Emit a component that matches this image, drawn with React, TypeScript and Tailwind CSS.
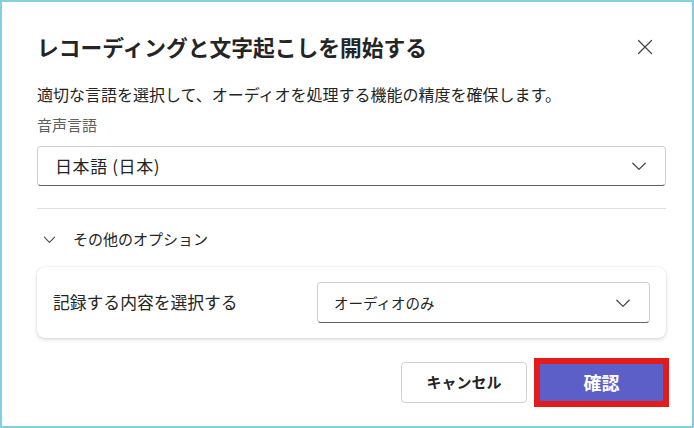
const FONT = '"Noto Sans CJK JP", "Noto Sans", sans-serif';

function ChevronDown({ size = 16 }: { size?: number }) {
  return (
    <svg width={size} height={size} viewBox="0 0 16 16" fill="none">
      <path d="M2.5 5.5 L8 11 L13.5 5.5" stroke="#424242" strokeWidth="1.1" strokeLinecap="round" strokeLinejoin="round" />
    </svg>
  );
}

export default function App() {
  return (
    <div
      className="w-[694px] h-[428px] bg-white border-2 border-[#86cfe0] flex flex-col pl-[35px] pr-[26px] pt-[31px] text-[#242424]"
      style={{ fontFamily: FONT }}
    >
      {/* header */}
      <div className="flex items-center justify-between h-[28px]">
        <h1 className="text-[21.75px] leading-[28px] font-semibold">レコーディングと文字起こしを開始する</h1>
        <button className="mr-[13px] w-4 h-4 flex items-center justify-center">
          <svg width="16" height="16" viewBox="0 0 16 16" fill="none">
            <path d="M1.5 1.5 L14.5 14.5 M14.5 1.5 L1.5 14.5" stroke="#424242" strokeWidth="1.2" strokeLinecap="round" />
          </svg>
        </button>
      </div>

      <p className="mt-[22px] text-[16px] leading-[22px]">適切な言語を選択して、オーディオを処理する機能の精度を確保します。</p>
      <label className="mt-[10px] text-[15px] leading-[20px] text-[#616161]">音声言語</label>

      <div className="mt-[11px] h-[40px] flex items-center justify-between rounded-[4px] border border-[#d1d1d1] border-b-[#616161] pl-[17px] pr-[17px]">
        <span className="text-[17px] tracking-[0.6px]">日本語 (日本)</span>
        <ChevronDown size={18} />
      </div>

      <div className="mt-[22px] h-px bg-[#e0e0e0]" />

      {/* more options toggle */}
      <div className="mt-[20px] h-[20px] flex items-center">
        <span className="ml-[5px]"><ChevronDown size={15} /></span>
        <span className="ml-[16px] text-[15px] leading-[20px]">その他のオプション</span>
      </div>

      <div className="mt-[18px] h-[71px] rounded-[8px] bg-white shadow-[0_0_2px_rgba(0,0,0,0.12),0_2px_4px_rgba(0,0,0,0.12)] flex items-center justify-between pl-[16px] pr-[16px]">
        <span className="text-[16.8px]">記録する内容を選択する</span>
        <div className="w-[333px] h-[41px] flex items-center justify-between rounded-[4px] border border-[#d1d1d1] border-b-[#616161] pl-[16px] pr-[17px]">
          <span className="text-[14.5px]">オーディオのみ</span>
          <ChevronDown size={18} />
        </div>
      </div>

      {/* footer */}
      <div className="mt-[20px] flex items-center justify-end mr-[-3px]">
        <button className="w-[126px] h-[41px] rounded-[4px] border border-[#d1d1d1] bg-white text-[15px] font-bold text-[#242424]">
          キャンセル
        </button>
        <div className="ml-[7px] w-[135px] h-[49px] border-[6px] border-[#e41b1b] bg-[#5b5fc7] flex items-center justify-center">
          <span className="text-[18px] font-bold text-white">確認</span>
        </div>
      </div>
    </div>
  );
}
